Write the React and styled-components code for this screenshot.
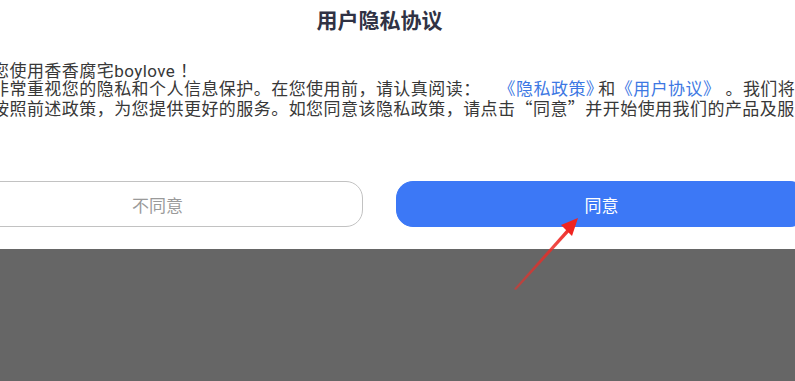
import React from "react";
import styled, { createGlobalStyle } from "styled-components";

const Global = createGlobalStyle`
  html, body { margin: 0; padding: 0; height: 100%; }
  body {
    background: #666666;
    overflow: hidden;
    font-family: Roboto, "Noto Sans CJK SC", sans-serif;
  }
  #root { width: 795px; overflow: hidden; }
`;

const Dialog = styled.section`
  position: relative;
  width: 855px;
  margin-left: -48px;
  height: 249px;
  box-sizing: border-box;
  background: #ffffff;
  padding-bottom: 22px;
  display: flex;
  flex-direction: column;
`;

const Title = styled.h1`
  margin: 0;
  height: 43px;
  line-height: 43px;
  text-align: center;
  font-size: 21px;
  font-weight: 700;
  color: #303244;
`;

const Body = styled.div`
  margin-top: 18.5px;
  padding-left: 40px;
  font-size: 17px;
  letter-spacing: 0.45px;
  line-height: 18.7px;
  color: #383838;
  white-space: nowrap;
  text-spacing-trim: space-all;
`;

const Line = styled.div`
  white-space: nowrap;
`;

const Quote = styled.span`
  font-family: "Noto Sans CJK SC", sans-serif;
`;

const Link = styled.span`
  color: #3d78e3;
  margin-left: ${(p) => p.$ml || 0}px;
  margin-right: ${(p) => p.$mr || 0}px;
`;

const Actions = styled.div`
  margin-top: auto;
  display: grid;
  grid-template-columns: 1fr 1fr;
  gap: 33px;
`;

const Button = styled.button`
  height: 46px;
  border-radius: 17px;
  font-family: inherit;
  font-size: 17px;
  box-sizing: border-box;
  cursor: pointer;
  border: 1px solid ${(p) => (p.$primary ? "#3c78f6" : "#c2c2c2")};
  background: ${(p) => (p.$primary ? "#3c78f6" : "#ffffff")};
  color: ${(p) => (p.$primary ? "#ffffff" : "#9a9a9a")};
`;

const Arrow = styled.svg`
  position: absolute;
  left: 0;
  top: 0;
  pointer-events: none;
`;

export default function App() {
  return (
    <>
      <Global />
      <Dialog>
        <Title>用户隐私协议</Title>
        <Body>
          <Line>您使用香香腐宅boylove ！</Line>
          <Line>
            非常重视您的隐私和个人信息保护。在您使用前，请认真阅读：
            <Link $ml={18} $mr={-5}>《隐私政策》</Link>和<Link $mr={5}>《用户协议》</Link>。我们将
          </Line>
          <Line>
            按照前述政策，为您提供更好的服务。如您同意该隐私政策，请点击<Quote>“</Quote>同意<Quote>”</Quote>并开始使用我们的产品及服务。
          </Line>
        </Body>
        <Actions>
          <Button>不同意</Button>
          <Button $primary>同意</Button>
        </Actions>
      </Dialog>
      <Arrow width="795" height="381" viewBox="0 0 795 381">
        <defs>
          <linearGradient id="ag" x1="513" y1="290" x2="578" y2="218" gradientUnits="userSpaceOnUse">
            <stop offset="0" stopColor="#e8312a" stopOpacity="0.6" />
            <stop offset="1" stopColor="#f02420" />
          </linearGradient>
        </defs>
        <path d="M514 289 L568 228 L570.5 230.5 L516 290 Z" fill="url(#ag)" />
        <path d="M578 218 L561 225 L572 236 Z" fill="#f02420" />
      </Arrow>
    </>
  );
}
